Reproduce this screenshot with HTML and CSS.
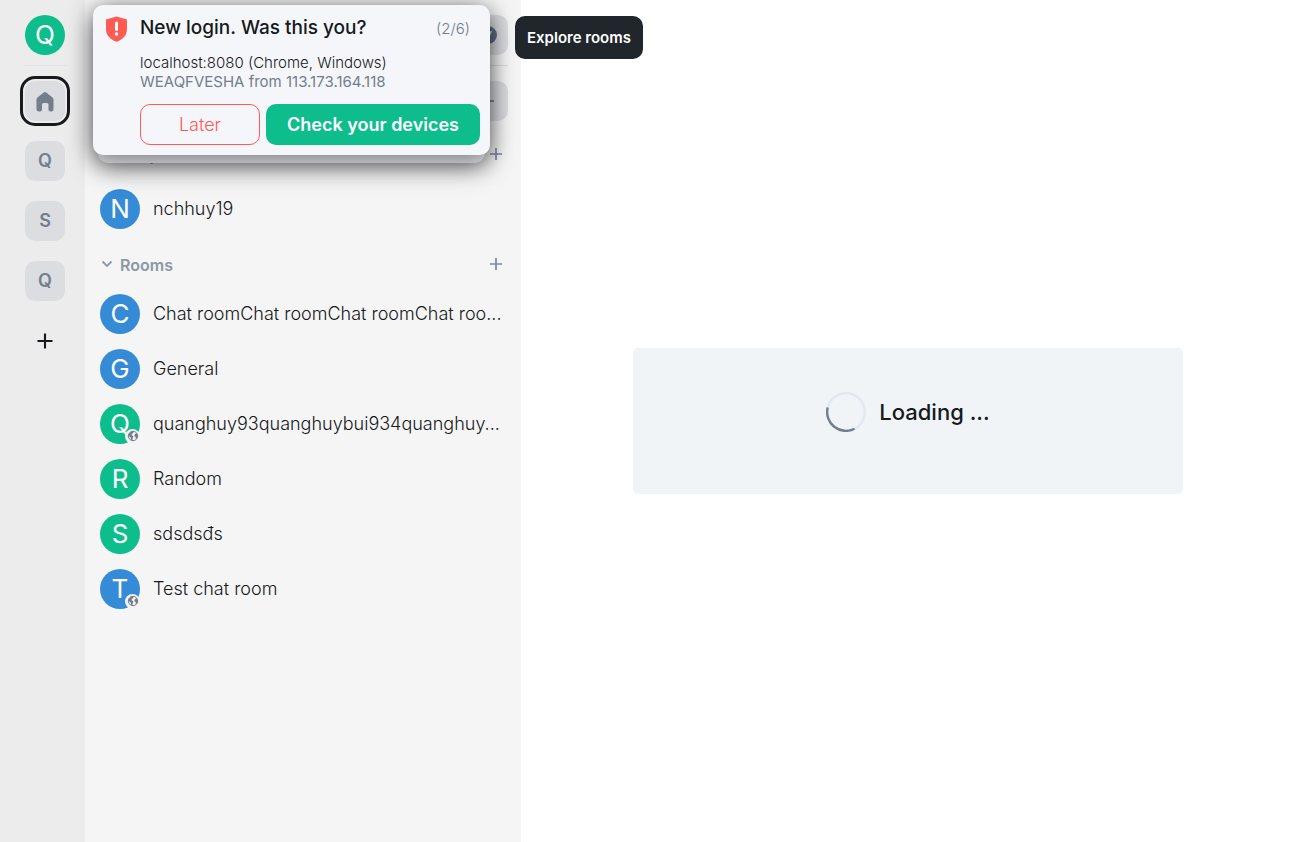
FILE: index.html
```html
<!DOCTYPE html>
<html lang="en">
<head>
<meta charset="utf-8">
<meta name="viewport" content="width=device-width, initial-scale=1">
<title>Chat</title>
<link rel="stylesheet" href="styles.css">
</head>
<body>
<svg class="defs" aria-hidden="true">
  <symbol id="plus" viewBox="0 0 16 16"><path d="M8 2v12M2 8h12" fill="none" stroke="currentColor" stroke-width="1.700"/></symbol>
  <symbol id="chevron" viewBox="0 0 12 12"><path d="M1.500 3.500L6 8l4.500-4.500" fill="none" stroke="currentColor" stroke-width="1.800"/></symbol>
  <symbol id="globe" viewBox="0 0 12 12"><circle cx="6" cy="6" r="4.700" fill="#f4f4f4" stroke="#737d8c" stroke-width="1"/><path d="M1.500 4.500L4 1.500L6.800 1.300L6.200 3L4.600 4.200L5 5.400L6.400 6.200L5.800 8L5.400 10.500L4 9.800L3.700 7.600L2 6.300ZM7.600 4.400L9.500 3L10.800 5.500L10.300 8L8.800 9.200L8.600 7L7.300 5.900Z" fill="#737d8c"/></symbol>
</svg>
<div class="app">
  <nav class="rail" aria-label="Spaces">
    <button class="avatar green" aria-label="User menu">Q</button>
    <hr class="rail-line">
    <button class="space active" aria-label="Home">
      <svg width="24" height="24" viewBox="0 0 24 24"><path d="M12 3Q12.600 3 13.200 3.500L19.600 8.600Q20.500 9.400 20.500 10.600V20Q20.500 22.500 18 22.500H17.500Q15.500 22.500 15.500 20.500V15.500Q15.500 14 14 14H10.500Q9 14 9 15.500V20.500Q9 22.500 7 22.500H6Q3.500 22.500 3.500 20V10.600Q3.500 9.400 4.400 8.600L10.800 3.500Q11.400 3 12 3Z" fill="#737d8c"/></svg>
    </button>
    <button class="space letter">Q</button>
    <button class="space letter">S</button>
    <button class="space letter">Q</button>
    <button class="space add" aria-label="Create a space"><svg width="20" height="20"><use href="#plus"/></svg></button>
  </nav>

  <aside class="panel">
    <div class="panel-row">
      <button class="tool" aria-label="Explore rooms">
        <svg width="20" height="20" viewBox="0 0 20 20"><circle cx="10" cy="10" r="9" fill="#61708b"/><path d="M14.500 5.500L11.600 11.600L5.500 14.500L8.400 8.400Z" fill="#dcdde1"/></svg>
      </button>
      <span class="tooltip" role="tooltip">Explore rooms</span>
    </div>
    <hr class="panel-line">
    <div class="panel-row">
      <button class="tool" aria-label="Add"><svg width="16" height="16"><use href="#plus"/></svg></button>
    </div>
    <section class="group people">
      <div class="group-head"><svg width="12" height="12"><use href="#chevron"/></svg><h2>People</h2><button class="add-room" aria-label="Start chat"><svg width="16" height="16"><use href="#plus"/></svg></button></div>
      <a class="room" href="#"><span class="avatar blue">N</span><span class="name">nchhuy19</span></a>
    </section>
    <section class="group">
      <div class="group-head"><svg width="12" height="12"><use href="#chevron"/></svg><h2>Rooms</h2><button class="add-room" aria-label="Add room"><svg width="16" height="16"><use href="#plus"/></svg></button></div>
      <a class="room" href="#"><span class="avatar blue">C</span><span class="name">Chat roomChat roomChat roomChat roo...</span></a>
      <a class="room" href="#"><span class="avatar blue">G</span><span class="name">General</span></a>
      <a class="room" href="#"><span class="avatar green">Q<span class="badge"><svg width="12" height="12"><use href="#globe"/></svg></span></span><span class="name">quanghuy93quanghuybui934quanghuy...</span></a>
      <a class="room" href="#"><span class="avatar green">R</span><span class="name">Random</span></a>
      <a class="room" href="#"><span class="avatar green">S</span><span class="name">sdsdsđs</span></a>
      <a class="room" href="#"><span class="avatar blue">T<span class="badge"><svg width="12" height="12"><use href="#globe"/></svg></span></span><span class="name">Test chat room</span></a>
    </section>
  </aside>

  <main class="main">
    <div class="loading" role="status">
      <svg width="40" height="40" viewBox="0 0 40 40"><circle cx="20" cy="20" r="18.800" fill="none" stroke="#e3e8f0" stroke-width="2.400"/><path d="M1.700 15.500A18.800 18.800 0 0 0 28.500 36.800" fill="none" stroke="#737d8c" stroke-width="2.400"/></svg>
      <span>Loading ...</span>
    </div>
  </main>
</div>

<div class="toasts">
  <div class="toast-under"></div>
  <div class="toast" role="alert">
    <svg width="23" height="27" viewBox="0 0 23 27"><path d="M11.500 1.500L22 4.500V14C22 20.500 17.500 24.800 11.500 26.800C5.500 24.800 1 20.500 1 14V4.500Z" fill="#ff5b55"/><path d="M11.500 8v6.500" stroke="#fff" stroke-width="3" stroke-linecap="round"/><circle cx="11.500" cy="19" r="1.700" fill="#fff"/></svg>
    <div class="toast-body">
      <div class="toast-head"><h1>New login. Was this you?</h1><span class="count">(2/6)</span></div>
      <p>localhost:8080 (Chrome, Windows)</p>
      <p class="detail">WEAQFVESHA from 113.173.164.118</p>
      <div class="actions"><button class="later">Later</button><button class="check">Check your devices</button></div>
    </div>
  </div>
</div>
</body>
</html>
```
FILE: styles.css
```css
* { box-sizing: border-box; }
body {
  margin: 0;
  font-family: Inter, "Noto Sans", sans-serif;
  font-size: 18px;
  color: #17191c;
  background: #fff;
}
button { border: 0; padding: 0; background: none; font: inherit; color: inherit; }
h1, h2, p, hr { margin: 0; }
svg { display: block; flex: none; }
.defs { position: absolute; width: 0; height: 0; }
.app { display: flex; min-height: 100vh; }

.rail {
  flex: none;
  width: 85px;
  padding: 15px 0 0 5px;
  display: flex;
  flex-direction: column;
  align-items: center;
  background: #ececec;
}
.rail-line { width: 45px; margin: 10px 0 15px; border: 0; border-top: 1px solid #e3e4e8; }
.space {
  display: grid;
  place-items: center;
  width: 40px;
  height: 40px;
  margin-bottom: 20px;
  border-radius: 10px;
  background: #dcdde1;
  color: #737d8c;
  font-weight: 600;
}
.space.letter { padding-bottom: 2px; }
.space.active { outline: 3px solid #17191c; outline-offset: 2px; }
.space.add { background: none; color: #17191c; }

.avatar {
  position: relative;
  flex: none;
  display: grid;
  place-items: center;
  width: 40px;
  height: 40px;
  border-radius: 50%;
  color: #fff;
  font-size: 26px;
  line-height: 40px;
  font-weight: 400;
}
.green { background: #0dbd8b; }
.blue { background: #368bd6; }
.badge {
  position: absolute;
  right: 0;
  bottom: 0;
  display: grid;
  place-items: center;
  width: 15px;
  height: 15px;
  border-radius: 50%;
  background: #f4f4f4;
}

.panel { flex: none; width: 436px; padding: 15px 13px 0 15px; background: #f5f5f5; }
.panel-row { position: relative; display: flex; justify-content: flex-end; }
.tool {
  display: grid;
  place-items: center;
  width: 40px;
  height: 40px;
  border-radius: 10px;
  background: #dcdde1;
  color: #61708b;
}
.panel-line { margin: 10px 0 15px; border: 0; border-top: 1px solid #dcdfe4; }
.tooltip {
  position: absolute;
  left: 100%;
  top: 1px;
  margin-left: 7px;
  padding: 12px;
  border-radius: 10px;
  background: #21262c;
  color: #fff;
  font-size: 15px;
  line-height: 19px;
  font-weight: 600;
  white-space: nowrap;
}
.group { padding-top: 13px; }
.group.people { padding-top: 18px; }
.group-head {
  display: flex;
  align-items: center;
  gap: 7px;
  height: 30px;
  margin-bottom: 7px;
  padding: 0 4px 0 1px;
  color: #8d97a5;
}
.people .group-head { margin-bottom: 12px; }
.group-head h2 { flex: 1; padding-top: 2px; font-size: 16px; line-height: 20px; font-weight: 600; }
.add-room { color: #7c87a0; }
.room {
  display: flex;
  align-items: center;
  gap: 13px;
  height: 55px;
  color: #17191c;
  text-decoration: none;
}
.name { overflow: hidden; white-space: nowrap; text-overflow: ellipsis; font-weight: 300; line-height: 24px; }

.main { flex: 1; display: grid; place-items: center; padding: 0 112px; }
.loading {
  display: flex;
  justify-content: center;
  gap: 13px;
  width: 100%;
  padding: 44px 0 62px;
  border-radius: 5px;
  background: #f0f4f7;
  font-size: 22px;
  line-height: 40px;
  font-weight: 500;
}

.toasts { position: absolute; top: 5px; left: 93px; width: 397px; }
.toast-under {
  position: absolute;
  inset: 8px 5px -8px;
  border-radius: 10px;
  background: #e0e2e6;
  box-shadow: 0 4px 24px rgba(0, 0, 0, .5);
}
.toast {
  position: relative;
  display: flex;
  gap: 12px;
  padding: 10px 10px 10px 12px;
  border-radius: 10px;
  background: #f4f6fa;
  box-shadow: 0 4px 24px rgba(0, 0, 0, .5);
}
.toast-body { flex: 1; font-size: 15px; line-height: 19px; font-weight: 300; }
.toast-head { display: flex; justify-content: space-between; padding: 0 10px 13px 0; line-height: 25px; }
.toast-head h1 { font-size: 19px; font-weight: 500; }
.count { color: #737d8c; font-size: 15px; line-height: 28px; height: 25px; }
.toast-body .detail { color: #737d8c; font-weight: 400; }
.actions { display: flex; gap: 6px; margin-top: 13px; font-size: 18px; }
.actions button { height: 41px; border-radius: 10px; }
.actions .later { width: 120px; border: 1px solid #ff5b55; color: #ff5b55; }
.actions .check { flex: 1; background: #0dbd8b; color: #fff; font-weight: 600; }
```
